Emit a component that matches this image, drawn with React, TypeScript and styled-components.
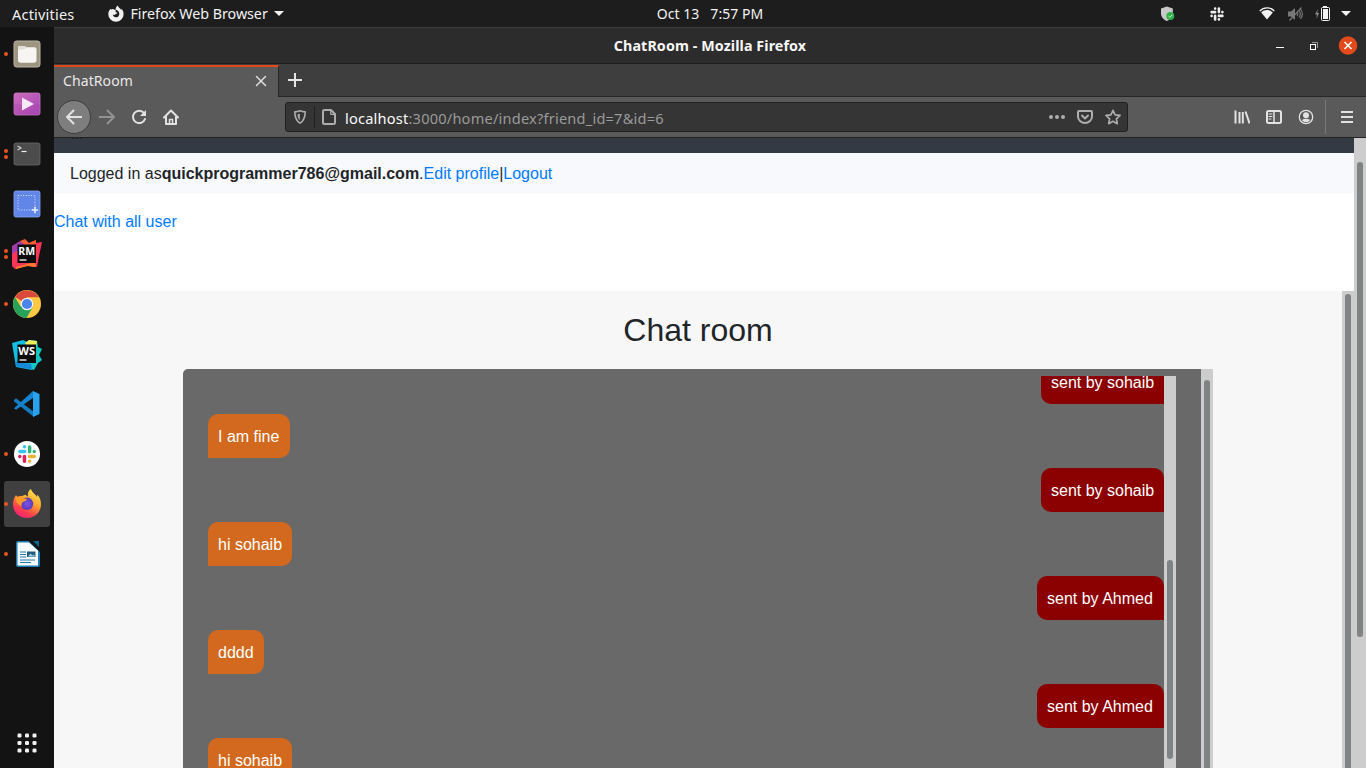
import React from "react";
import styled, { createGlobalStyle } from "styled-components";

const GlobalStyle = createGlobalStyle`
  * { box-sizing: border-box; }
  html, body { margin: 0; padding: 0; overflow: hidden; background: #131313; }
  svg { display: block; flex: none; }
`;

const Desktop = styled.div`
  width: 1366px;
  height: 768px;
  display: flex;
  flex-direction: column;
  overflow: hidden;
  background: #131313;
  font-family: "Noto Sans", "Open Sans", sans-serif;
`;

const TopBar = styled.header`
  height: 27px;
  flex: none;
  display: grid;
  grid-template-columns: 1fr auto 1fr;
  align-items: center;
  padding-left: 54px;
  background: #1d1d1d;
  color: #f2f2f2;
`;

const Label = styled.span<{ $size?: number; $spacing?: number; $weight?: number; $color?: string }>`
  font-size: ${(p) => p.$size ?? 14}px;
  letter-spacing: ${(p) => p.$spacing ?? 0}px;
  font-weight: ${(p) => p.$weight ?? 400};
  color: ${(p) => p.$color ?? "inherit"};
  line-height: 20px;
  white-space: pre;
`;

const TopLeft = styled.div`
  display: flex;
  align-items: center;
  margin-left: -42px;
`;

const AppMenu = styled.div`
  display: flex;
  align-items: center;
  margin-left: 34px;
  gap: 6px;
`;

const TopRight = styled.div`
  display: flex;
  align-items: center;
  justify-content: flex-end;
  padding-right: 15px;
`;

const Gap = styled.span<{ $w: number }>`
  flex: none;
  width: ${(p) => p.$w}px;
`;

const Body = styled.div`
  flex: 1;
  min-height: 0;
  display: flex;
`;

const Dock = styled.nav`
  width: 54px;
  flex: none;
  display: flex;
  flex-direction: column;
  padding-top: 2px;
  background: #131313;
`;

const DockCell = styled.div`
  height: 50px;
  display: flex;
  align-items: center;
  padding-left: 4px;
`;

const DockItem = styled.div<{ $active?: boolean }>`
  width: 46px;
  height: 46px;
  border-radius: 3px;
  background: ${(p) => (p.$active ? "#404040" : "transparent")};
  display: flex;
  align-items: center;
`;

const Dots = styled.div`
  width: 4px;
  display: flex;
  flex-direction: column;
  gap: 2px;
  margin-right: 3px;
`;

const Dot = styled.i`
  width: 4px;
  height: 4px;
  border-radius: 50%;
  background: #e95420;
`;

const AppsButton = styled.div`
  margin-top: auto;
  padding: 0 0 15px 17px;
`;

const Window = styled.main`
  width: 1312px;
  flex: none;
  display: flex;
  flex-direction: column;
`;

const TitleBar = styled.div`
  height: 37px;
  flex: none;
  display: grid;
  grid-template-columns: 1fr auto 1fr;
  align-items: center;
  background: #2c2c2c;
  border-top: 1px solid #3c3c3c;
  border-bottom: 1px solid #1f1f1f;
  color: #f7f7f7;
`;

const WindowControls = styled.div`
  display: flex;
  align-items: center;
  justify-content: flex-end;
  padding-right: 8px;
`;

const TabStrip = styled.div`
  height: 33px;
  flex: none;
  display: flex;
  background: #3e3e3e;
  color: #e8e8e8;
`;

const Tab = styled.div`
  width: 225px;
  display: flex;
  align-items: center;
  justify-content: space-between;
  padding: 0 11px 2px 9px;
  margin-top: 1px;
  background: #5a5a5a;
  border-top: 2px solid #e2491a;
  border-right: 1px solid #272727;
`;

const TabRest = styled.div`
  flex: 1;
  display: flex;
  align-items: center;
  padding-left: 9px;
  border-bottom: 1px solid #272727;
`;

const NavBar = styled.div`
  height: 41px;
  flex: none;
  display: flex;
  align-items: center;
  background: #5a5a5a;
  border-bottom: 1px solid #232323;
  color: #e2e2e2;
`;

const BackButton = styled.div`
  width: 34px;
  height: 34px;
  margin-left: 3px;
  border-radius: 50%;
  background: #7e7e7e;
  border: 1px solid #3d3d3d;
  display: flex;
  align-items: center;
  justify-content: center;
`;

const UrlBar = styled.div`
  width: 843px;
  height: 30px;
  display: flex;
  align-items: center;
  background: #353535;
  border: 1px solid #202020;
  border-radius: 3px;
  color: #adadad;
  padding: 0 6px;
`;

const UrlText = styled.div`
  flex: 1;
  display: flex;
  padding: 1px 0 0 8px;
`;

const Divider = styled.span<{ $h: number; $color: string }>`
  width: 1px;
  flex: none;
  height: ${(p) => p.$h}px;
  background: ${(p) => p.$color};
`;

const Viewport = styled.div`
  flex: 1;
  min-height: 0;
  display: flex;
  background: #fff;
  font-family: "Liberation Sans", Arial, sans-serif;
  font-size: 16px;
  line-height: 24px;
  color: #212529;
`;

const Page = styled.div`
  flex: 1;
  min-width: 0;
  display: flex;
  flex-direction: column;
`;

const DarkStrip = styled.div`
  height: 15px;
  flex: none;
  background: #343a43;
  padding-left: 18px;
`;

const AccountBar = styled.div`
  height: 40px;
  flex: none;
  display: flex;
  align-items: center;
  padding: 2px 0 0 16px;
  background: #f8f9fc;
`;

const Link = styled.a`
  color: #007bff;
`;

const AllUsers = styled.div`
  height: 98px;
  flex: none;
  padding-top: 17px;
`;

const RoomFrame = styled.section`
  flex: 1;
  min-height: 0;
  display: flex;
`;

const Room = styled.div`
  flex: 1;
  display: flex;
  flex-direction: column;
  align-items: center;
  padding-top: 20px;
  background: #f7f7f7;
`;

const Heading = styled.h2`
  margin: 0 0 20px;
  font-size: 32px;
  line-height: 38px;
  font-weight: 400;
`;

const Panel = styled.div`
  width: 1030px;
  flex: 1;
  min-height: 0;
  display: flex;
  background: #696969;
  border-radius: 5px 0 0 0;
  overflow: hidden;
`;

const PanelBody = styled.div`
  flex: 1;
  min-height: 0;
  display: flex;
  padding: 7px 25px 0;
`;

const Messages = styled.div`
  flex: 1;
  min-height: 0;
  overflow: hidden;
  display: flex;
  flex-direction: column;
`;

const MessageList = styled.div`
  display: flex;
  flex-direction: column;
  gap: 10px;
  margin-top: -16px;
`;

const Bubble = styled.div<{ $mine?: boolean; $w: number }>`
  width: ${(p) => p.$w}px;
  height: 44px;
  flex: none;
  padding: 11px 0 9px 10px;
  white-space: nowrap;
  color: #fff;
  align-self: ${(p) => (p.$mine ? "flex-end" : "flex-start")};
  background: ${(p) => (p.$mine ? "#8b0000" : "#d2691e")};
  border-radius: ${(p) => (p.$mine ? "10px 10px 0 10px" : "10px 10px 10px 0")};
`;

const Track = styled.div<{ $top: number }>`
  width: 12px;
  flex: none;
  display: flex;
  flex-direction: column;
  align-items: center;
  padding-top: ${(p) => p.$top}px;
  background: #cdcdcd;
  overflow: hidden;
`;

const Thumb = styled.div<{ $h: number }>`
  width: 6px;
  height: ${(p) => p.$h}px;
  flex: none;
  border-radius: 3px;
  background: #7f8383;
`;

const Caret = () => (
  <svg width="10" height="5" viewBox="0 0 10 5"><path d="M0 0h10L5 5z" fill="#f2f2f2" /></svg>
);

const FirefoxMono = () => (
  <svg width="16" height="18" viewBox="0 0 16 18">
    <path d="M2.300 4C.9 5.500.300 7.300.300 9.200a7.600 7.600 0 0 0 15.300 0c0-2.200-.8-4.200-2.300-5.600l.1 1.600C12.500 3.400 10.400 2.600 9.700.4 8.200 1.500 7.500 3 7.700 4.500c2.300.7 3.600 2.400 3.600 4.400 0 2-1.500 3.400-3.400 3.400-1.700 0-3-1.200-3.100-2.700 1 .6 2.300.4 2.900-.7 1-.2 1.700-.6 1.600-1.200-1.200-.3-1.500-.8-1.900-1.500.1-.5.300-.9.700-1.200C6.600 4.700 5.700 4.400 5 3.900c-.8.100-1.300.3-1.700.7C2.800 4.500 2.500 4.300 2.300 4z" fill="#f0f0f0" />
  </svg>
);

const ShieldStatus = () => (
  <svg width="15" height="16" viewBox="0 0 15 16">
    <path d="M1 2.500 6.800.5l6 2v5c0 3.600-2.800 6-6 7.600C3.600 13.500 1 11 1 7.500z" fill="#c9c9c9" />
    <circle cx="10.300" cy="10" r="4" fill="#2fb14c" />
    <path d="m8.400 10 1.400 1.400 2.500-2.600" fill="none" stroke="#c9f0d0" strokeWidth="1" />
  </svg>
);

const slackStrokes = (c: string[]) => (
  <g fill="none" strokeWidth="2.600" strokeLinecap="round">
    <path d="M1.600 5.100h3.500M5.100 1.600h.01" stroke={c[0]} />
    <path d="M8.900 1.600v3.500M12.400 5.100h.01" stroke={c[1]} />
    <path d="M8.900 8.900h3.500M8.900 12.400h.01" stroke={c[2]} />
    <path d="M5.100 8.900v3.500M1.600 8.900h.01" stroke={c[3]} />
  </g>
);

const Wifi = () => (
  <svg width="16" height="13" viewBox="0 0 16 13">
    <path d="M.7 4C4.800-.2 11.200-.2 15.300 4" fill="none" stroke="#f2f2f2" strokeWidth="1.300" />
    <path d="M2.200 5.400c3.400-3.100 8.200-3.100 11.600 0L8 12.600z" fill="#f2f2f2" />
  </svg>
);

const Muted = () => (
  <svg width="15" height="14" viewBox="0 0 15 14">
    <path d="M0 4.500h3L7 1v12L3 9.500H0z" fill="#777" />
    <path d="M9 5c.8 1 .8 3 0 4M11 3.500c1.500 2 1.500 5 0 7M12.500 2c2.200 3 2.200 7 0 10M13.500.5l-12 13" fill="none" stroke="#777" strokeWidth="1.200" />
  </svg>
);

const Battery = () => (
  <svg width="15" height="16" viewBox="0 0 15 16">
    <path d="M3 3 0 8.500h2L1.500 13 4 7H2.200z" fill="#8d8d8d" />
    <path d="M8 0h4v1.500H8z" fill="#f2f2f2" />
    <rect x="6.500" y="1.500" width="8" height="13" rx="1" fill="none" stroke="#f2f2f2" />
    <path d="M8 3h5v10H8z" fill="#f2f2f2" />
  </svg>
);

const icon = (children: React.ReactNode) => (
  <svg width="32" height="32" viewBox="0 0 32 32">{children}</svg>
);

const Files = () => icon(
  <>
    <rect x="3" y="3" width="26" height="26" rx="2.500" fill="#9d9581" stroke="#bdb6a5" />
    <path d="M7 9.500Q7 8 8.500 8h4.700q1 0 1.500 1.200h8.800Q25.500 9.200 25.500 11v11q0 2.800-2.800 2.800H9.800Q7 24.800 7 22z" fill="#f6f5f1" />
    <path d="M7 12V9.500Q7 8 8.500 8h4.700q1 0 1.500 1.200V11z" fill="#e2dfd6" />
  </>
);

const Video = () => icon(
  <>
    <defs><linearGradient id="vid" x1="0" y1="0" x2="1" y2="1"><stop offset="0" stopColor="#cf6bbd" /><stop offset="1" stopColor="#a148b5" /></linearGradient></defs>
    <rect x="3" y="5" width="26" height="22" rx="2" fill="url(#vid)" stroke="#cb78c4" strokeWidth=".8" />
    <path d="M3 16h26v9q0 2-2 2H5q-2 0-2-2z" fill="#b143ae" opacity=".3" />
    <path d="M11 9.500v13l12-6.500z" fill="#f6e8f6" />
  </>
);

const TerminalIcon = () => icon(
  <>
    <rect x="3" y="5" width="26" height="22" rx="2" fill="#4c4c4c" stroke="#6b6b6b" strokeWidth=".8" />
    <path d="m6.500 8 3.500 2-3.500 2" fill="none" stroke="#d5d5d5" strokeWidth="1.100" />
    <path d="M10.500 13.500h5" stroke="#f0f0f0" strokeWidth="1.200" />
  </>
);

const Screenshot = () => icon(
  <>
    <rect x="3" y="3" width="26" height="26" rx="2" fill="#6286e8" stroke="#87a7f5" strokeWidth=".8" />
    <rect x="7" y="7.500" width="17" height="14.500" fill="none" stroke="#d8e4ff" strokeWidth="1" strokeDasharray="1 1.600" />
    <path d="M20.800 22h6.400M24 18.800v6.400" stroke="#e6eeff" strokeWidth="1.600" />
  </>
);

const JetBrains = ({ ws }: { ws?: boolean }) => icon(
  <>
    {ws ? (
      <>
        <path d="M1 5 12 2l6 3 6 10-3 17-16-3z" fill="#14bfe2" />
        <path d="m14 5 4-3 8 1 1 6 4 2-3 6 3 5-4 3-4 7-10-3z" fill="#12c6c4" />
        <path d="m14 5 4-3 8 1-1 6-8 2z" fill="#f0ed5c" />
        <path d="m4 23 16 3 1 5.500-16-3z" fill="#1688d5" />
      </>
    ) : (
      <>
        <path d="m1 9 8-5 9 1 7-3 0 3 6-1-3 14-2 11-9-1-13 3-3-3z" fill="#fb3557" />
        <path d="m1 8 8-5 7 4-8 5-7 4z" fill="#a43cae" />
        <path d="m9 3 5-2 4 4 7-3v4l-10 2z" fill="#f55e35" />
        <path d="m5 29 19-5 1 5-9-1-11 3z" fill="#ff7a2f" />
      </>
    )}
    <path d="M6.500 6.500h18.500v18.500h-18.500z" fill="#0c0c0c" />
    <text x="7.300" y="16.900" fontFamily="Noto Sans, sans-serif" fontWeight="700" fontSize="11" textLength="16.700" lengthAdjust="spacingAndGlyphs" fill="#fff">{ws ? "WS" : "RM"}</text>
    <path d="M8.500 22h7" stroke="#fff" strokeWidth="1.300" />
  </>
);

const Chrome = () => icon(
  <>
    <circle cx="16" cy="16" r="14" fill="#fdc943" />
    <path d="M16 16 3.900 9A14 14 0 0 1 28.100 9.300H16z" fill="#d94a3c" />
    <path d="M3.900 9A14 14 0 0 0 15.500 30l6-10.500L16 16 9.500 18.500z" fill="#27a25a" />
    <circle cx="16" cy="16" r="6.300" fill="#f4f4f4" />
    <circle cx="16" cy="16" r="5.100" fill="#4a86ee" />
  </>
);

const VsCode = () => icon(
  <>
    <path d="m3 12 2-1.700 18 13.700v5L3 13.500z" fill="#1479bd" />
    <path d="M3 20.200 22 3v7L5 21.800z" fill="#1683cf" />
    <path d="m22 3 6.500 3v20L22 29z" fill="#2aa3ee" />
  </>
);

const Slack = () => icon(
  <>
    <circle cx="16" cy="16" r="13" fill="#fff" />
    <g fill="none" strokeWidth="3.500" strokeLinecap="round" transform="translate(7 7) scale(1.290)">
      <path d="M1.500 5h3.700M5 1.400h.01" stroke="#36c5f0" strokeWidth="2.700" />
      <path d="M9 1.500v3.700M12.600 5h.01" stroke="#2eb67d" strokeWidth="2.700" />
      <path d="M8.900 9h3.700M9 12.600h.01" stroke="#ecb22e" strokeWidth="2.700" />
      <path d="M5 8.900v3.700M1.400 9h.01" stroke="#e01e5a" strokeWidth="2.700" />
    </g>
  </>
);

const Firefox = () => icon(
  <>
    <defs>
      <linearGradient id="fx" x1=".8" y1="0" x2=".25" y2="1"><stop offset="0" stopColor="#fff04f" /><stop offset=".4" stopColor="#ffa52e" /><stop offset=".75" stopColor="#ff3f4d" /><stop offset="1" stopColor="#f5207c" /></linearGradient>
      <radialGradient id="fp"><stop offset="0" stopColor="#7a54e8" /><stop offset="1" stopColor="#593bb8" /></radialGradient>
    </defs>
    <path d="M5 7c.4 1 .8 1.600 1.500 2 1.200-.8 3-1.200 5-1 .8-.8 1.700-1 2.800-1.200l2.700 2C16.500 5 17.500 2.500 20 1c.8 3.700 4.300 4.700 6 8 .3-.9.300-1.500.2-2.500C28.700 9 30 12.600 30 16.300 30 24 24 30 16 30S2 24 2 16.400C2 12.500 3.200 9.500 5 7z" fill="url(#fx)" />
    <circle cx="16" cy="15.800" r="6.200" fill="url(#fp)" />
    <path d="M5 8c1.500 1 3 1 5 .500 2 1 3.500 2.500 6 2.600 0 1.400-1.500 2-3 2.400-2.300.6-3 2.500-2 4.500-3-1-6-3-6-7z" fill="#ff9a28" />
  </>
);

const Writer = () => icon(
  <>
    <path d="M7 3h13l9 8v16q0 2-2 2H7q-2 0-2-2V5q0-2 2-2z" fill="#1c7db5" />
    <path d="M6.500 4.500h11.500l9 8V27.500h-20.500z" fill="#f7fbff" />
    <path d="M17.500 3H29v11z" fill="#131313" />
    <path d="M22 3h6v6z" fill="#17638f" />
    <path d="M9 14h6M9 16.500h6M9 19h6M9 22h15M9 24.500h11" stroke="#2479a8" strokeWidth="1.200" />
    <path d="M16 13.500h8.500v5.500H16z" fill="#235c80" />
    <path d="m17 18.500 2.500-3 2 2 1.500-1 1 2z" fill="#9ed1ee" />
  </>
);

const dockApps: { Icon: React.FC; dots: number; active?: boolean }[] = [
  { Icon: Files, dots: 1 },
  { Icon: Video, dots: 0 },
  { Icon: TerminalIcon, dots: 2 },
  { Icon: Screenshot, dots: 0 },
  { Icon: () => <JetBrains />, dots: 2 },
  { Icon: Chrome, dots: 1 },
  { Icon: () => <JetBrains ws />, dots: 0 },
  { Icon: VsCode, dots: 0 },
  { Icon: Slack, dots: 1 },
  { Icon: Firefox, dots: 1, active: true },
  { Icon: Writer, dots: 1 },
];

const messages = [
  { text: "sent by sohaib", mine: true, width: 123 },
  { text: "I am fine", width: 82 },
  { text: "sent by sohaib", mine: true, width: 123 },
  { text: "hi sohaib", width: 84 },
  { text: "sent by Ahmed", mine: true, width: 127 },
  { text: "dddd", width: 56 },
  { text: "sent by Ahmed", mine: true, width: 127 },
  { text: "hi sohaib", width: 84 },
];

const Glyph = ({ children, size = 16, color = "currentColor", sw = 2 }: { children: React.ReactNode; size?: number; color?: string; sw?: number }) => (
  <svg width={size} height={size} viewBox="0 0 16 16" fill="none" stroke={color} strokeWidth={sw} strokeLinecap="round" strokeLinejoin="round">
    {children}
  </svg>
);

export default function App() {
  return (
    <Desktop>
      <GlobalStyle />
      <TopBar>
        <TopLeft>
          <Label $size={14.5} $spacing={0.2}>Activities</Label>
          <AppMenu>
            <FirefoxMono />
            <Label $size={14.3} $spacing={-0.05}>Firefox Web Browser</Label>
            <Caret />
          </AppMenu>
        </TopLeft>
        <Label $spacing={0.03}>{"Oct 13   7:57 PM"}</Label>
        <TopRight>
          <ShieldStatus />
          <Gap $w={35} />
          <svg width="14" height="14" viewBox="0 0 14 14">{slackStrokes(["#eee", "#eee", "#eee", "#eee"])}</svg>
          <Gap $w={35} />
          <Wifi />
          <Gap $w={13} />
          <Muted />
          <Gap $w={12} />
          <Battery />
          <Gap $w={11} />
          <Caret />
        </TopRight>
      </TopBar>
      <Body>
        <Dock>
          {dockApps.map(({ Icon, dots, active }, i) => (
            <DockCell key={i}>
              <DockItem $active={active}>
                <Dots>{Array.from({ length: dots }, (_, d) => <Dot key={d} />)}</Dots>
                <Icon />
              </DockItem>
            </DockCell>
          ))}
          <AppsButton>
            <svg width="20" height="20" viewBox="0 0 20 20" fill="#f0f0f0">
              {[2.5, 10, 17.5].map((y) => [2.5, 10, 17.5].map((x) => (
                <rect key={`${x}-${y}`} x={x - 2} y={y - 2} width="4" height="4" rx="1.200" />
              )))}
            </svg>
          </AppsButton>
        </Dock>
        <Window>
          <TitleBar>
            <span />
            <Label $weight={700} $size={14.3} $spacing={0.09}>ChatRoom - Mozilla Firefox</Label>
            <WindowControls>
              <svg width="8" height="8" viewBox="0 0 8 8"><path d="M0 5.500h8" stroke="#fff" /></svg>
              <Gap $w={26} />
              <svg width="8" height="8" viewBox="0 0 8 8" fill="none">
                <path d="M2 .5h5.500V6" stroke="#999" />
                <rect x=".5" y="2.500" width="5" height="5" stroke="#fff" />
              </svg>
              <Gap $w={20} />
              <svg width="20" height="20" viewBox="0 0 20 20">
                <circle cx="10" cy="9.500" r="9.300" fill="#e24a1b" />
                <path d="m6.500 6 7 7m0-7-7 7" stroke="#fff" strokeWidth="1.500" />
              </svg>
            </WindowControls>
          </TitleBar>
          <TabStrip>
            <Tab>
              <Label $size={14} $spacing={0.1}>ChatRoom</Label>
              <svg width="12" height="12" viewBox="0 0 12 12"><path d="m1.500 1.500 9 9m0-9-9 9" stroke="#dedede" strokeWidth="1.500" strokeLinecap="round" /></svg>
            </Tab>
            <TabRest>
              <svg width="14" height="14" viewBox="0 0 14 14"><path d="M7 0v14M0 7h14" stroke="#e4e4e4" strokeWidth="2" /></svg>
            </TabRest>
          </TabStrip>
          <NavBar>
            <BackButton><Glyph><path d="M7.500 1.500 1 8l6.500 6.500M1 8h14.500" /></Glyph></BackButton>
            <Gap $w={8} />
            <Glyph color="#929292"><path d="M8.500 1.500 15 8l-6.500 6.500M15 8H.5" /></Glyph>
            <Gap $w={16} />
            <Glyph><path d="M14 10a6.200 6.200 0 1 1-1-6" /><path d="M15 1v6H9z" fill="currentColor" stroke="none" /></Glyph>
            <Gap $w={16} />
            <Glyph><path d="M1 8.500 8 1.500l7 7M3 8v7h10V8" /><path d="M6.500 15v-4.500h3V15" strokeWidth="1.500" /></Glyph>
            <Gap $w={106} />
            <UrlBar>
              <Glyph sw={1.6}><path d="M8 1.800c2 .8 3.500 1 5.200 1.100 0 5.500-.9 8.500-5.200 11.300C3.700 11.400 2.800 8.400 2.800 2.900 4.500 2.800 6 2.600 8 1.800z" /><path d="M7.800 4.800v6.500C6 9.500 5.500 8 5.500 5.300z" fill="currentColor" stroke="none" /></Glyph>
              <Gap $w={6} />
              <Divider $h={22} $color="#202020" />
              <Gap $w={6} />
              <Glyph><path d="M3.500 1H10l4 4v8.500Q14 15 12.500 15h-9Q2 15 2 13.500v-11Q2 1 3.500 1z" /><path d="M9.800 1.500V5.300h4" strokeWidth="1.300" /></Glyph>
              <UrlText>
                <Label $size={14.6} $spacing={0.2} $color="#fafafa">localhost</Label>
                <Label $size={14.6} $spacing={0.2} $color="#9a9a9a">:3000/home/index?friend_id=7&amp;id=6</Label>
              </UrlText>
              <Glyph><g fill="currentColor" stroke="none"><circle cx="2" cy="8" r="2" /><circle cx="8" cy="8" r="2" /><circle cx="14" cy="8" r="2" /></g></Glyph>
              <Gap $w={12} />
              <Glyph><path d="M2 2h12q1 0 1 1v4.500a7 6.500 0 0 1-14 0V3q0-1 1-1z" /><path d="m5 6.500 3 3 3-3" /></Glyph>
              <Gap $w={12} />
              <Glyph sw={1.700}><path d="m8 1.300 2.100 4.500 4.900.6-3.600 3.400.9 4.900L8 12.300l-4.300 2.400.9-4.900L1 6.400l4.900-.6z" /></Glyph>
            </UrlBar>
            <Gap $w={106} />
            <Glyph><path d="M1.500 1.500v13M5.500 3v11.500M8.800 3v11.500M11.500 2.500l4 12" strokeLinecap="butt" /></Glyph>
            <Gap $w={16} />
            <Glyph><rect x="1" y="2" width="14" height="12" rx="1.500" /><path d="M8 2v12" strokeWidth="1.500" /><path d="M3 5h3M3 7.500h3M3 10h2" strokeWidth="1" /></Glyph>
            <Gap $w={16} />
            <Glyph sw={1.300}><circle cx="8" cy="8" r="6.700" /><circle cx="8" cy="6.300" r="3" fill="currentColor" stroke="none" /><path d="M3.800 11Q8 8.700 12.200 11 10.500 13.300 8 13.300T3.800 11z" fill="currentColor" stroke="none" /></Glyph>
            <Gap $w={11} />
            <Divider $h={34} $color="#7a7a7a" />
            <Gap $w={13} />
            <Glyph><path d="M2 3h12M2 8h12M2 13h12" strokeLinecap="butt" /></Glyph>
          </NavBar>
          <Viewport>
            <Page>
              <DarkStrip>
                <svg width="10" height="1" viewBox="0 0 10 1" fill="#20242a"><path d="M0 0h2v1H0zM4 0h2v1H4zM8 0h2v1H8z" /></svg>
              </DarkStrip>
              <AccountBar>
                <span>Logged in as</span>
                <b>quickprogrammer786@gmail.com</b>
                <span>.</span>
                <Link>Edit profile</Link>
                <span>|</span>
                <Link>Logout</Link>
              </AccountBar>
              <AllUsers><Link>Chat with all user</Link></AllUsers>
              <RoomFrame>
                <Room>
                  <Heading>Chat room</Heading>
                  <Panel>
                    <PanelBody>
                      <Messages>
                        <MessageList>
                          {messages.map((m, i) => <Bubble key={i} $mine={m.mine} $w={m.width}>{m.text}</Bubble>)}
                        </MessageList>
                      </Messages>
                      <Track $top={184}><Thumb $h={199} /></Track>
                    </PanelBody>
                    <Track $top={11}><Thumb $h={420} /></Track>
                  </Panel>
                </Room>
                <Track $top={3}><Thumb $h={500} /></Track>
              </RoomFrame>
            </Page>
            <Track $top={24}><Thumb $h={475} /></Track>
          </Viewport>
        </Window>
      </Body>
    </Desktop>
  );
}
